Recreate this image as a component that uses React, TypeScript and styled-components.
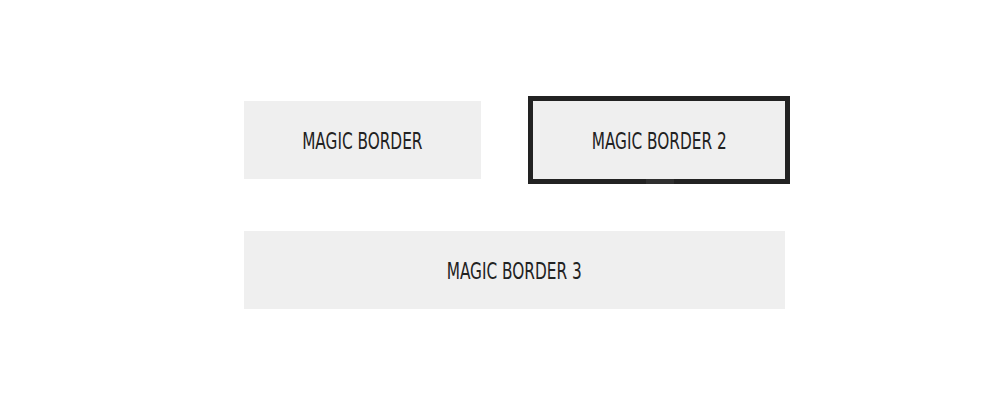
import styled, { createGlobalStyle } from 'styled-components';

const GlobalStyle = createGlobalStyle`
    body {
        margin: 0;
        background: #ffffff;
    }
`;

const Page = styled.div`
    width: 1000px;
    height: 400px;
    box-sizing: border-box;
    padding: 101px 0 0 244px;
`;

const Grid = styled.div`
    display: grid;
    grid-template-columns: 237px 252px;
    column-gap: 52px;
    row-gap: 52px;
`;

const MagicBox = styled.div<{ $bordered?: boolean; $wide?: boolean }>`
    position: relative;
    height: 78px;
    display: flex;
    align-items: center;
    justify-content: center;
    background-color: #efefef;
    color: #222222;
    font-family: 'DejaVu Sans Condensed', 'DejaVu Sans', sans-serif;
    font-size: 23px;
    text-transform: uppercase;
    grid-column: ${(p) => (p.$wide ? '1 / span 2' : 'auto')};
    box-shadow: ${(p) => (p.$bordered ? '0 0 0 5px #222222' : 'none')};

    &::after {
        content: '';
        display: ${(p) => (p.$bordered ? 'block' : 'none')};
        position: absolute;
        left: 113px;
        bottom: -5px;
        width: 28px;
        height: 5px;
        background-color: #2f2f2f;
    }
`;

const Label = styled.span`
    display: inline-block;
    transform: scaleX(0.74);
    padding-top: 1px;
`;

export default function App() {
    return (
        <Page>
            <GlobalStyle />
            <Grid>
                <MagicBox>
                    <Label>Magic Border</Label>
                </MagicBox>
                <MagicBox $bordered>
                    <Label>Magic Border 2</Label>
                </MagicBox>
                <MagicBox $wide>
                    <Label>Magic Border 3</Label>
                </MagicBox>
            </Grid>
        </Page>
    );
}
